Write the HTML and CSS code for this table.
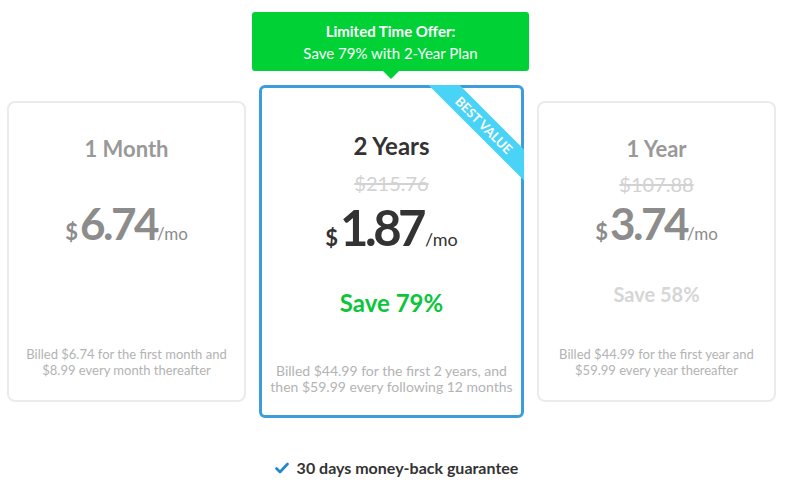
FILE: index.html
```html
<!DOCTYPE html>
<html>
<head>
<meta charset="utf-8">
<link rel="stylesheet" href="styles.css">
</head>
<body>
<div class="page">
  <div class="plans">
    <div class="offer">
      <div class="offer-title">Limited Time Offer:</div>
      <div class="offer-sub">Save 79% with 2-Year Plan</div>
    </div>

    <div class="card side">
      <div class="title">1 Month</div>
      <div class="strike empty"></div>
      <div class="price"><span class="cur">$</span><span class="num">6.74</span><span class="per">/mo</span></div>
      <div class="save empty"></div>
      <div class="billed">Billed $6.74 for the first month and<br>$8.99 every month thereafter</div>
    </div>

    <div class="card main">
      <div class="ribbon-wrap"><div class="ribbon">BEST VALUE</div></div>
      <div class="title">2 Years</div>
      <div class="strike">$215.76</div>
      <div class="price"><span class="cur">$</span><span class="num">1.87</span><span class="per">/mo</span></div>
      <div class="save">Save 79%</div>
      <div class="billed">Billed $44.99 for the first 2 years, and<br>then $59.99 every following 12 months</div>
    </div>

    <div class="card side">
      <div class="title">1 Year</div>
      <div class="strike">$107.88</div>
      <div class="price"><span class="cur">$</span><span class="num">3.74</span><span class="per">/mo</span></div>
      <div class="save">Save 58%</div>
      <div class="billed">Billed $44.99 for the first year and<br>$59.99 every year thereafter</div>
    </div>
  </div>

  <div class="guarantee">
    <svg class="check" width="14" height="12" viewBox="0 0 14 12"><path d="M1.5 6.5 L5 10 L12.5 2" fill="none" stroke="#1f86cf" stroke-width="2.6" stroke-linecap="round" stroke-linejoin="round"/></svg>
    <span>30 days money-back guarantee</span>
  </div>
</div>
</body>
</html>
```

FILE: styles.css
```css
* { box-sizing: border-box; }
html, body { margin: 0; padding: 0; background: #fff; }
body {
  font-family: Lato, "Open Sans", sans-serif;
  color: #333;
  width: 786px;
  height: 494px;
  overflow: hidden;
}
.page {
  padding: 12px 0 0 7px;
}
.plans {
  display: grid;
  grid-template-columns: 239px 265px 239px;
  grid-template-rows: 59px auto;
  column-gap: 13px;
  row-gap: 14px;
  align-items: center;
}
.offer {
  grid-column: 2;
  grid-row: 1;
  margin: 0 -5px 0 -7px;
  height: 59px;
  background: #00d236;
  border-radius: 3px;
  color: #fff;
  text-align: center;
  font-size: 15px;
  line-height: 22px;
  padding-top: 8px;
  position: relative;
}
.offer::after {
  content: "";
  position: absolute;
  left: 50%;
  bottom: -8px;
  margin-left: -8px;
  border-left: 8px solid transparent;
  border-right: 8px solid transparent;
  border-top: 8px solid #00d236;
}
.offer-title { font-weight: 700; }
.offer-sub { font-weight: 400; }

.card {
  grid-row: 2;
  display: flex;
  flex-direction: column;
  align-items: center;
  text-align: center;
  background: #fff;
  position: relative;
}
.side {
  height: 301px;
  border: 2px solid #ebebeb;
  border-radius: 8px;
  padding: 31px 0 22px;
}
.main {
  height: 333px;
  border: 3px solid #3b9edb;
  border-radius: 6px;
  padding: 43px 0 20px;
}
.title {
  font-weight: 700;
  font-size: 22px;
  line-height: 30px;
  color: #999;
}
.main .title { font-size: 24px; color: #333; }
.strike {
  font-size: 20px;
  line-height: 28px;
  height: 28px;
  color: #d2d2d2;
  text-decoration: line-through;
  margin-top: 6px;
}
.main .strike { margin-top: 8px; }
.price {
  height: 50px;
  display: flex;
  align-items: baseline;
  justify-content: center;
  color: #8c8c8c;
  font-weight: 700;
  line-height: 50px;
}
.main .price { height: 60px; line-height: 60px; color: #333; }
.cur { font-size: 22px; margin-right: 2px; }
.num { font-size: 44px; letter-spacing: -2.5px; }
.main .num { font-size: 49px; letter-spacing: -3.5px; }
.per { font-size: 17px; font-weight: 400; margin-left: 0; }
.main .per { font-size: 18px; margin-left: 2px; }
.save {
  font-weight: 700;
  font-size: 20px;
  line-height: 30px;
  height: 30px;
  color: #d6d6d6;
  margin-top: 31px;
}
.main .save { color: #0ac639; font-size: 24px; }
.billed {
  margin-top: auto;
  font-size: 13px;
  line-height: 16px;
  color: #b3b3b3;
}
.main .billed { font-size: 14px; }

.ribbon-wrap {
  position: absolute;
  top: -3px;
  right: -3px;
  width: 100px;
  height: 100px;
  overflow: hidden;
  border-top-right-radius: 6px;
}
.ribbon {
  position: absolute;
  left: -20px;
  top: 29px;
  width: 160px;
  height: 22px;
  line-height: 22px;
  background: #48d3f7;
  color: #fff;
  font-weight: 700;
  font-size: 13px;
  text-align: center;
  transform: rotate(45deg);
}

.guarantee {
  display: flex;
  align-items: center;
  justify-content: center;
  gap: 8px;
  margin-top: 40px;
  padding-left: 0;
  font-weight: 700;
  font-size: 16px;
  color: #333;
}
.check { display: block; }
```
